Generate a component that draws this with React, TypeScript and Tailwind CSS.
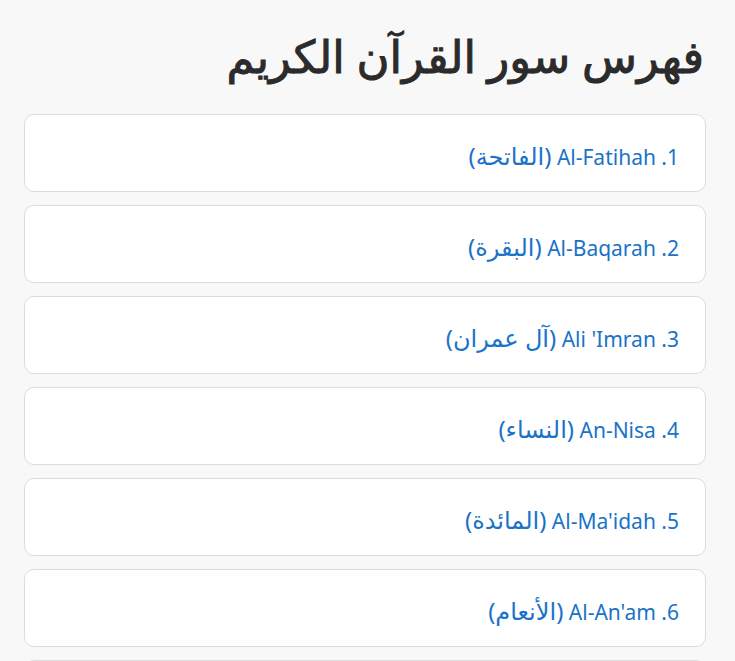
const surahs = [
  { n: 1, en: "Al-Fatihah", ar: "الفاتحة" },
  { n: 2, en: "Al-Baqarah", ar: "البقرة" },
  { n: 3, en: "Ali 'Imran", ar: "آل عمران" },
  { n: 4, en: "An-Nisa", ar: "النساء" },
  { n: 5, en: "Al-Ma'idah", ar: "المائدة" },
  { n: 6, en: "Al-An'am", ar: "الأنعام" },
  { n: 7, en: "Al-A'raf", ar: "الأعراف" },
];

export default function App() {
  return (
    <div
      dir="rtl"
      className="min-h-screen bg-[#f8f8f8] pl-6 pr-[29px] pt-[24px] font-['Segoe_UI','Noto_Sans','DejaVu_Sans',sans-serif]"
    >
      <h1 className="text-[45px] leading-[64px] font-normal text-[#2b2b2b] pr-[2px] mb-[26px] [-webkit-text-stroke:1px_#2b2b2b]">
        فهرس سور القرآن الكريم
      </h1>
      <ul className="flex flex-col gap-[13px]">
        {surahs.map((s) => (
          <li
            key={s.n}
            className="h-[78px] bg-white border border-[#dcdcdc] rounded-[10px] flex items-center pr-[26px] pl-6 pt-[6px]"
          >
            <a href="#" className="text-[21px] text-[#1a73c7]">
              {s.n}. {s.en} <span className="text-[24px]">({s.ar})</span>
            </a>
          </li>
        ))}
      </ul>
    </div>
  );
}
